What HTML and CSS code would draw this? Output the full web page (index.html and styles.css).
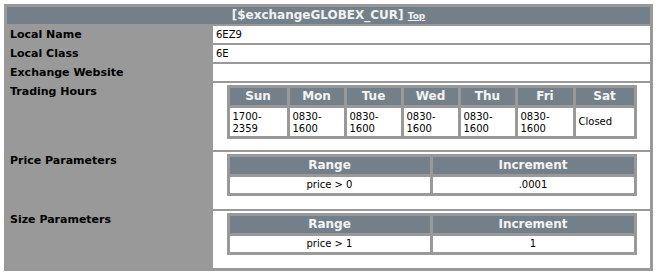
FILE: index.html
```html
<!DOCTYPE html>
<html>
<head>
<meta charset="utf-8">
<link rel="stylesheet" href="styles.css">
</head>
<body>
<div class="sheet">
  <div class="title">[$exchangeGLOBEX_CUR] <a class="top" href="#">Top</a></div>

  <div class="label">Local Name</div>
  <div class="value">6EZ9</div>

  <div class="label">Local Class</div>
  <div class="value">6E</div>

  <div class="label">Exchange Website</div>
  <div class="value"></div>

  <div class="label">Trading Hours</div>
  <div class="value box">
    <div class="inner hours">
      <div class="th">Sun</div>
      <div class="th">Mon</div>
      <div class="th">Tue</div>
      <div class="th">Wed</div>
      <div class="th">Thu</div>
      <div class="th">Fri</div>
      <div class="th">Sat</div>
      <div class="td">1700-<br>2359</div>
      <div class="td">0830-<br>1600</div>
      <div class="td">0830-<br>1600</div>
      <div class="td">0830-<br>1600</div>
      <div class="td">0830-<br>1600</div>
      <div class="td">0830-<br>1600</div>
      <div class="td mid">Closed</div>
    </div>
  </div>

  <div class="label">Price Parameters</div>
  <div class="value box">
    <div class="inner params">
      <div class="th">Range</div>
      <div class="th">Increment</div>
      <div class="td center">price &gt; 0</div>
      <div class="td center">.0001</div>
    </div>
  </div>

  <div class="label">Size Parameters</div>
  <div class="value box">
    <div class="inner params">
      <div class="th">Range</div>
      <div class="th">Increment</div>
      <div class="td center">price &gt; 1</div>
      <div class="td center">1</div>
    </div>
  </div>
</div>
</body>
</html>
```

FILE: styles.css
```css
html, body {
  margin: 0;
  padding: 0;
  background: #ffffff;
}

body {
  font-family: "DejaVu Sans", Verdana, sans-serif;
  color: #000;
}

.sheet {
  margin: 4px 0 0 4px;
  width: 643px;
  padding: 3px;
  background: #999999;
  display: grid;
  grid-template-columns: 204px 437px;
  grid-auto-rows: 17px;
  grid-template-rows: 17px 17px 17px 17px 67px 57px 57px;
  column-gap: 2px;
  row-gap: 2px;
}

.title {
  grid-column: 1 / span 2;
  background: #748089;
  color: #f2f2f2;
  font-weight: bold;
  font-size: 12px;
  line-height: 17px;
  text-align: center;
}

.top {
  color: #f2f2f2;
  font-size: 9px;
  text-decoration: underline;
}

.label {
  font-weight: bold;
  font-size: 11px;
  line-height: 17px;
  padding-left: 3px;
}

.value {
  background: #ffffff;
  font-size: 10px;
  line-height: 17px;
  padding-left: 3px;
}

.value.box {
  padding: 2px 0 0 0;
}

.inner {
  width: 404px;
  margin: 0 auto;
  padding: 3px;
  background: #999999;
  display: grid;
  gap: 3px;
}

.hours {
  grid-template-columns: 57px 54px 54px 54px 54px 55px 58px;
  grid-template-rows: 17px 28px;
}

.params {
  grid-template-columns: 200px 201px;
  grid-template-rows: 17px 16px;
}

.th {
  background: #748089;
  color: #f4f4f4;
  font-weight: bold;
  font-size: 12px;
  line-height: 17px;
  text-align: center;
}

.td {
  background: #ffffff;
  font-size: 10px;
  line-height: 12px;
  padding: 3px 2px 1px 3px;
}

.td.mid {
  display: flex;
  align-items: center;
  padding-top: 0;
  padding-bottom: 0;
}

.td.center {
  text-align: center;
  padding: 2px 0 0 0;
}
```
